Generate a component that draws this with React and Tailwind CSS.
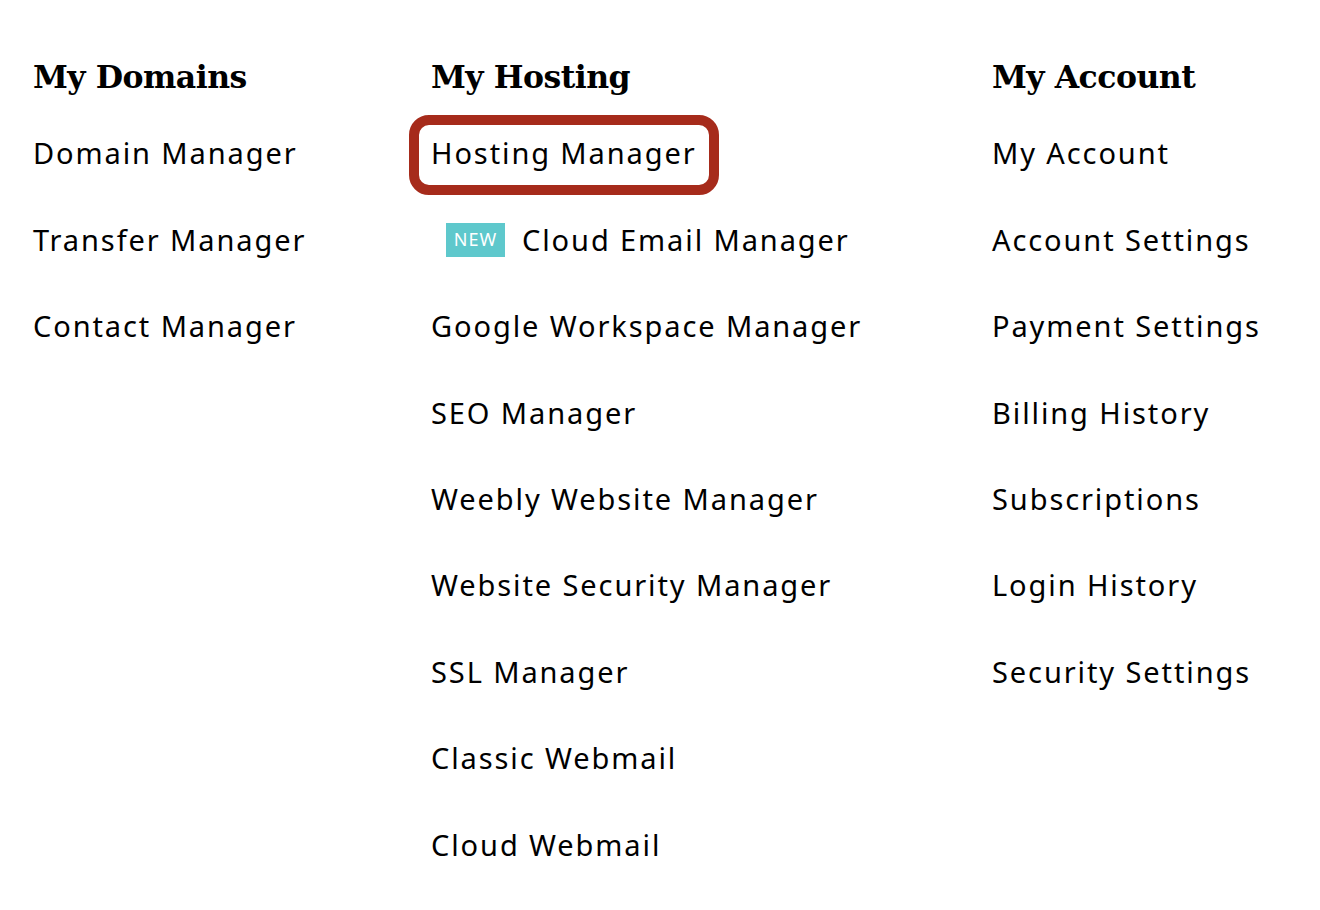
import React from "react";

const sans = { fontFamily: '"Noto Sans", "Liberation Sans", sans-serif' };
const serif = { fontFamily: '"DejaVu Serif", "Liberation Serif", serif' };

function Heading({ children }) {
  return (
    <h2
      style={serif}
      className="h-[40px] leading-[40px] text-[31.5px] font-bold text-black tracking-[-0.5px] mt-[1px]"
    >
      {children}
    </h2>
  );
}

function Item({ children, highlight, badge }) {
  return (
    <li className="relative h-[86.4px] flex items-center">
      {highlight && (
        <span className="absolute left-[-22px] top-[5px] h-[80px] w-[310px] rounded-[20px] border-[10px] border-[#a62b1b] pointer-events-none" />
      )}
      {badge && (
        <span
          style={sans}
          className="ml-[15px] mr-[17px] w-[59px] h-[34px] flex items-center justify-center bg-[#5ec8cc] text-white text-[18px] tracking-[1px]"
        >
          NEW
        </span>
      )}
      <span style={sans} className="text-[29px] text-black tracking-[1.9px] whitespace-nowrap">
        {children}
      </span>
    </li>
  );
}

export default function App() {
  return (
    <div className="w-[1320px] h-[910px] bg-white flex pl-[33px] pt-[56px]">
      <div className="w-[398px]">
        <Heading>My Domains</Heading>
        <ul className="mt-[13px]">
          <Item>Domain Manager</Item>
          <Item>Transfer Manager</Item>
          <Item>Contact Manager</Item>
        </ul>
      </div>
      <div className="w-[561px]">
        <Heading>My Hosting</Heading>
        <ul className="mt-[13px]">
          <Item highlight>Hosting Manager</Item>
          <Item badge>Cloud Email Manager</Item>
          <Item>Google Workspace Manager</Item>
          <Item>SEO Manager</Item>
          <Item>Weebly Website Manager</Item>
          <Item>Website Security Manager</Item>
          <Item>SSL Manager</Item>
          <Item>Classic Webmail</Item>
          <Item>Cloud Webmail</Item>
        </ul>
      </div>
      <div className="flex-1">
        <Heading>My Account</Heading>
        <ul className="mt-[13px]">
          <Item>My Account</Item>
          <Item>Account Settings</Item>
          <Item>Payment Settings</Item>
          <Item>Billing History</Item>
          <Item>Subscriptions</Item>
          <Item>Login History</Item>
          <Item>Security Settings</Item>
        </ul>
      </div>
    </div>
  );
}
